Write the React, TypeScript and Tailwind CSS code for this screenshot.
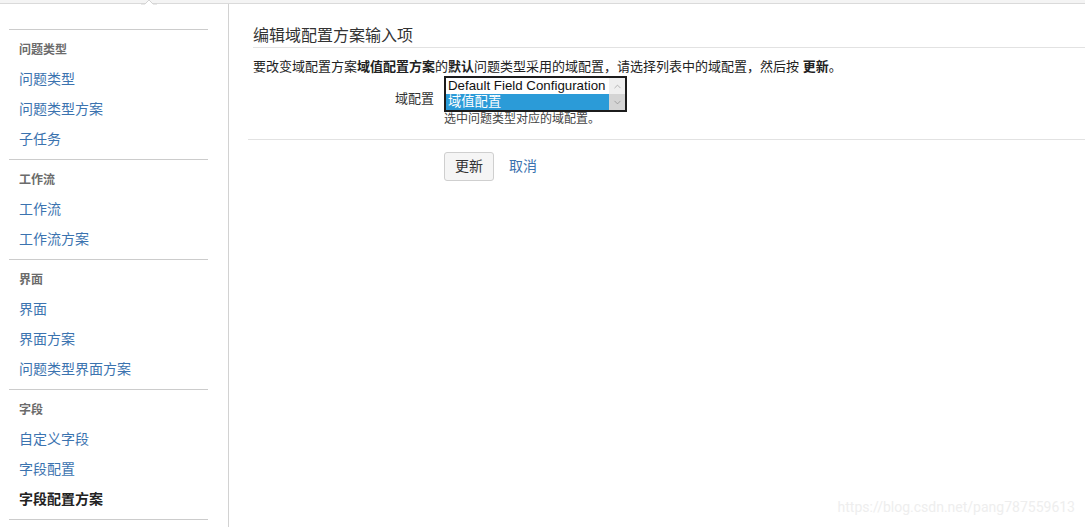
import { ChevronUp, ChevronDown } from 'lucide-react';

const groups = [
  { title: '问题类型', items: ['问题类型', '问题类型方案', '子任务'] },
  { title: '工作流', items: ['工作流', '工作流方案'] },
  { title: '界面', items: ['界面', '界面方案', '问题类型界面方案'] },
  { title: '字段', items: ['自定义字段', '字段配置', '字段配置方案'] },
];

const active = '字段配置方案';

export default function App() {
  return (
    <div className="relative w-[1085px] h-[527px] overflow-hidden bg-white font-['Liberation_Sans','Noto_Sans_CJK_SC',sans-serif] text-[#333]">
      {/* top strip with caret */}
      <div className="relative h-[4px] bg-[#f4f4f4] border-b border-[#dadada]">
        <svg className="absolute left-[141px] top-0" width="16" height="5" viewBox="0 0 16 5">
          <path d="M0 4.5 L4 4.5 L8 0 L12 4.5 L16 4.5 L16 5 L0 5 Z" fill="#fff" />
          <path d="M0 4 L4 4 L8 0 L12 4 L16 4" fill="none" stroke="#d4d4d4" strokeWidth="1" />
        </svg>
      </div>

      <div className="flex h-[523px]">
        {/* sidebar */}
        <div className="w-[229px] shrink-0 border-r border-[#d2d2d2] pl-[9px] pr-[20px] pt-[25px]">
          {groups.map((g) => (
            <div key={g.title} className="border-t border-[#cccccc] pt-[6px] pb-[5px]">
              <div className="h-[28px] flex items-center pl-[10px] text-[12px] font-bold text-[#6b6b6b]">{g.title}</div>
              {g.items.map((item) => (
                <div
                  key={item}
                  className={`h-[30px] flex items-center pl-[10px] text-[14px] ${
                    item === active ? 'font-bold text-[#222]' : 'text-[#3b73af]'
                  }`}
                >
                  {item}
                </div>
              ))}
            </div>
          ))}
          <div className="border-t border-[#cccccc]" />
        </div>

        {/* main */}
        <div className="flex-1 pl-[19px] pt-[20px]">
          <div className="pl-[5px]">
            <h2 className="h-[24px] leading-[24px] text-[16px] text-[#333] border-b border-[#e2e2e2]">编辑域配置方案输入项</h2>
            <p className="mt-[10px] text-[13px] leading-[18px] text-[#222]">
              要改变域配置方案<b>域值配置方案</b>的<b>默认</b>问题类型采用的域配置，请选择列表中的域配置，然后按 <b>更新</b>。
            </p>
            <div className="flex">
              <div className="w-[181px] pt-[15px] text-right text-[13px] leading-[16px] text-[#333]">域配置</div>
              <div className="ml-[10px]">
                <div className="flex w-[183px] h-[36px] border-2 border-[#1c1c1c] bg-white">
                  <div className="flex-1 text-[13.3px] leading-[16px]">
                    <div className="h-[16px] pl-[2px] text-[#111]">Default Field Configuration</div>
                    <div className="h-[16px] pl-[2px] bg-[#2b9bd8] text-white">域值配置</div>
                  </div>
                  <div className="w-[16px] flex flex-col">
                    <div className="h-[16px] bg-[#efefef] flex items-center justify-center">
                      <ChevronUp size={11} strokeWidth={1.5} className="text-[#9a9a9a]" />
                    </div>
                    <div className="h-[16px] bg-[#d4d4d4] flex items-center justify-center">
                      <ChevronDown size={11} strokeWidth={1.5} className="text-[#8a8a8a]" />
                    </div>
                  </div>
                </div>
                <div className="text-[12px] leading-[14px] text-[#444]">选中问题类型对应的域配置。</div>
              </div>
            </div>
          </div>

          <div className="mt-[13px] border-t border-[#e2e2e2]" />

          <div className="flex items-center mt-[12px] pl-[196px]">
            <button className="w-[50px] h-[29px] rounded-[3px] border border-[#cfcfcf] bg-[#f5f5f5] text-[14px] text-[#333]">更新</button>
            <a className="ml-[15px] text-[14px] text-[#3b73af]">取消</a>
          </div>
        </div>
      </div>

      <div className="absolute right-[10px] bottom-[9px] text-[14px] text-[#eeeeee] font-['Roboto',sans-serif]">
        https://blog.csdn.net/pang787559613
      </div>
    </div>
  );
}
